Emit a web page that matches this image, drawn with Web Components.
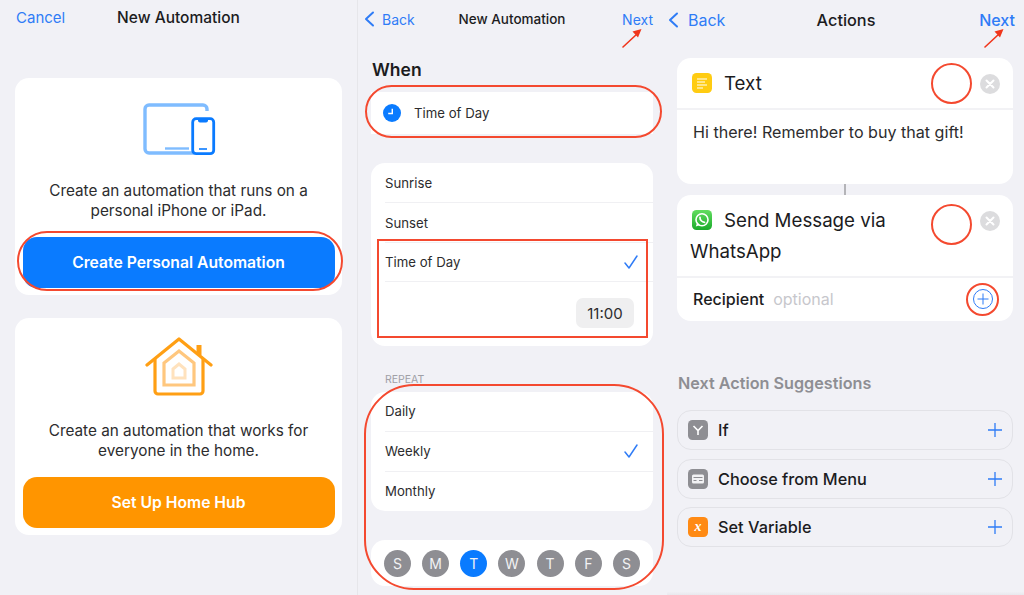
<!DOCTYPE html>
<html>
<head>
<meta charset="utf-8">
<title>Automation steps</title>
<style>
    html, body {
        margin: 0;
        height: 100%;
        background: #f1f1f6;
        font-family: Inter, "Liberation Sans", sans-serif;
        color: #1c1c1e;
        overflow: hidden;
    }
    #screens {
        display: grid;
        grid-template-columns: 357px 307px 360px;
        width: 1024px;
        height: 595px;
    }
</style>
</head>
<body>

<template id="nav-template">
    <style>
        :host {
            display: grid;
            grid-template-columns: 1fr auto 1fr;
            align-items: center;
            height: var(--nav-height, 34px);
            padding: var(--nav-padding, 0 16px);
            font-size: var(--nav-size, 15.5px);
        }
        .side { color: #2f7cf6; display: flex; align-items: center; font-size: var(--nav-side-size, 15px); }
        .end { justify-content: flex-end; font-weight: var(--next-weight, 400); }
        .title { font-weight: 500; color: #1c1c1e; }
    </style>
    <div class="side"><slot name="start"></slot></div>
    <div class="title"><slot></slot></div>
    <div class="side end"><slot name="end"></slot></div>
</template>

<template id="card-template">
    <style>
        :host {
            display: block;
            background: #fff;
            border-radius: 14px;
            overflow: hidden;
        }
    </style>
    <slot></slot>
</template>

<template id="row-template">
    <style>
        :host {
            display: flex;
            align-items: center;
            justify-content: space-between;
            height: 39.8px;
            margin-left: 14px;
            padding-right: 15px;
            font-size: 13.2px;
            color: #2c2c2e;
            box-sizing: border-box;
            border-bottom: 1px solid #f0f0f3;
        }
        :host([last]) { border-bottom: 0; }
        svg { display: none; }
        :host([checked]) svg { display: block; }
    </style>
    <slot></slot>
    <svg width="14" height="14" viewBox="0 0 14 14" fill="none" stroke="#2f7cf6" stroke-width="1.5" stroke-linecap="round" stroke-linejoin="round"><path d="M1 8l4 5L13 1"/></svg>
</template>

<template id="choice-template">
    <style>
        :host {
            display: flex;
            flex-direction: column;
            align-items: center;
            height: 100%;
            box-sizing: border-box;
            background: #fff;
            border-radius: 14px;
            padding: var(--choice-top, 25px) 8px 7.5px;
        }
        p {
            margin: 0;
            height: 42px;
            padding-top: 24px;
            font-size: 15.3px;
            line-height: 19.5px;
            text-align: center;
            color: #2c2c2e;
        }
        button {
            margin-top: auto;
            width: 312px;
            height: 51px;
            border: 0;
            border-radius: 14px;
            background: var(--action, #0a7bff);
            color: #fff;
            font: 600 15.7px Inter, "Liberation Sans", sans-serif;
        }
    </style>
    <slot name="icon"></slot>
    <p><slot name="text"></slot></p>
    <button><slot name="action"></slot></button>
</template>

<template id="day-template">
    <style>
        :host {
            display: flex;
            align-items: center;
            justify-content: center;
            width: 27px;
            height: 27px;
            border-radius: 50%;
            background: #8e8e93;
            color: #f2f2f4;
            font-size: 14px;
        }
        :host([on]) { background: #0a7bff; }
    </style>
    <slot></slot>
</template>

<template id="action-template">
    <style>
        :host {
            display: block;
            background: #fff;
            border-radius: 14px;
            overflow: hidden;
        }
        header {
            position: relative;
            padding: 10px 13px 9px var(--head-left, 15px);
            font-size: 18.7px;
            line-height: 31px;
            border-bottom: 2px solid #f2f2f5;
            color: #1c1c1e;
        }
        .icon { display: inline-block; width: 20px; height: 20px; vertical-align: -3px; margin-right: var(--icon-gap, 12px); }
        .close {
            position: absolute;
            right: 13px;
            top: 16px;
            width: 20px;
            height: 20px;
        }
    </style>
    <header>
        <span class="icon"><slot name="icon"></slot></span><slot name="title"></slot>
        <svg class="close" viewBox="0 0 20 20"><circle cx="10" cy="10" r="10" fill="#dcdcde"/><path d="M6.5 6.5l7 7M13.5 6.5l-7 7" stroke="#fff" stroke-width="2" stroke-linecap="round"/></svg>
    </header>
    <slot></slot>
</template>

<template id="suggestion-template">
    <style>
        :host {
            display: flex;
            align-items: center;
            gap: 10px;
            height: 40px;
            padding: 0 10px;
            box-sizing: border-box;
            border: 1px solid #e2e2e7;
            border-radius: 14px;
            font-size: 16.3px;
            font-weight: 500;
            color: #1c1c1e;
        }
        span { flex: 1; }
    </style>
    <slot name="icon"></slot>
    <span><slot></slot></span>
    <svg width="14" height="14" viewBox="0 0 14 14" stroke="#2f7cf6" stroke-width="1.3"><path d="M7 0v14M0 7h14"/></svg>
</template>

<template id="mark-template">
    <style>
        :host {
            position: absolute;
            display: block;
            box-sizing: border-box;
            border: 2px solid #f4492f;
            pointer-events: none;
        }
    </style>
</template>

<template id="arrow-template">
    <style>
        :host { position: absolute; display: block; width: 20px; height: 20px; }
        svg { display: block; }
    </style>
    <svg width="20" height="20" viewBox="0 0 20 20" fill="#f0361c" stroke="#f0361c" stroke-width="1.6" stroke-linecap="round">
        <path d="M1 19L15 6" fill="none"/>
        <path d="M19.5 1l-9 2.5 5.500 6z" stroke="none"/>
    </svg>
</template>

<div id="screens">
    <!-- first screen -->
    <section style="position: relative; padding: 0 15px;">
        <ios-nav style="--nav-padding: 0 1px; margin-bottom: 44px;">
            <span slot="start">Cancel</span>
            New Automation
        </ios-nav>
        <choice-card style="height: 217px; margin-bottom: 23px;">
            <svg slot="icon" width="74" height="54" viewBox="0 0 74 54" fill="none">
                <path d="M65 8V6a4 4 0 0 0-4-4H7a4 4 0 0 0-4 4v40a4 4 0 0 0 4 4h45" stroke="#7fbcff" stroke-width="3.4"/>
                <path d="M23 45.5h24" stroke="#7fbcff" stroke-width="2.4"/>
                <rect x="50.7" y="15.7" width="21" height="35" rx="3.5" stroke="#0a7bff" stroke-width="2.8"/>
                <path d="M56 16.5h10v1a2 2 0 0 1-2 2h-6a2 2 0 0 1-2-2z" fill="#0a7bff"/>
                <path d="M57 46h8" stroke="#0a7bff" stroke-width="1.6"/>
            </svg>
            <span slot="text">Create an automation that runs on a<br>personal iPhone or iPad.</span>
            <span slot="action">Create Personal Automation</span>
        </choice-card>
        <choice-card style="height: 217px; --action: #ff9500; --choice-top: 19px;">
            <svg slot="icon" width="68" height="60" viewBox="0 0 68 60" fill="none" stroke-linecap="round" stroke-linejoin="round">
                <path d="M2 28L34 2l32 26" stroke="#ff9f14" stroke-width="3.2"/>
                <path d="M54 18V8" stroke="#ff9f14" stroke-width="5" stroke-linecap="butt"/>
                <path d="M10 22.5V54a3 3 0 0 0 3 3h42a3 3 0 0 0 3-3V22.5" stroke="#ff9f14" stroke-width="3.2"/>
                <path d="M19 26L34 14l15 12v22H19z" stroke="#ffc77e" stroke-width="3.2" stroke-linejoin="miter"/>
                <path d="M28 32l6-5 6 5v9H28z" stroke="#ffe2bd" stroke-width="3" stroke-linejoin="miter"/>
            </svg>
            <span slot="text">Create an automation that works for<br>everyone in the home.</span>
            <span slot="action">Set Up Home Hub</span>
        </choice-card>
        <red-mark style="left: 17px; top: 231px; width: 326px; height: 60px; border-radius: 30px;"></red-mark>
    </section>

    <!-- second screen -->
    <section style="position: relative; padding: 0 11px 0 13px; border-left: 1px solid #e6e6ea; box-sizing: border-box;">
        <ios-nav style="--nav-padding: 0; --nav-height: 38px; --nav-size: 13.5px; --nav-side-size: 14px; --chevron-gap: 7px; margin: 0 -7px 0 -7px;">
            <span slot="start"><back-chevron></back-chevron>Back</span>
            New Automation
            <span slot="end" style="margin-right: 7px;">Next</span>
        </ios-nav>
        <h2 style="margin: 22px 0 12px 1px; font-size: 17.5px; line-height: 20px; font-weight: 600;">When</h2>
        <ios-card style="height: 42px; border-radius: 0; display: flex; align-items: center; gap: 13px; padding-left: 12px; font-size: 13.2px; color: #2c2c2e;">
            <svg width="18" height="18" viewBox="0 0 19 19"><circle cx="9.5" cy="9.5" r="9.5" fill="#0a7bff"/><path d="M9.8 5v5H5.5" fill="none" stroke="#fff" stroke-width="1.5"/></svg>
            Time of Day
        </ios-card>
        <ios-card style="margin-top: 29px; height: 183px;">
            <ios-row style="padding-top: 1px;">Sunrise</ios-row>
            <ios-row style="padding-top: 1px;">Sunset</ios-row>
            <ios-row checked style="padding-top: 1px;">Time of Day</ios-row>
            <ios-row last style="justify-content: flex-end; padding: 0 19px 0 0; height: 62px; margin: 0; font-size: 15px;">
                <span style="display: flex; align-items: center; justify-content: center; width: 58px; height: 30px; background: #efeff0; border-radius: 7px;">11:00</span>
            </ios-row>
        </ios-card>
        <div style="margin: 27px 0 0 14px; height: 19px; font-size: 10.5px; line-height: 13px; color: #a0a0a6;">REPEAT</div>
        <ios-card style="height: 119px;">
            <ios-row>Daily</ios-row>
            <ios-row checked>Weekly</ios-row>
            <ios-row last>Monthly</ios-row>
        </ios-card>
        <ios-card style="margin-top: 29px; height: 46px; display: flex; align-items: center; justify-content: space-between; padding: 0 13px; box-sizing: border-box;">
            <week-day>S</week-day><week-day>M</week-day><week-day on>T</week-day><week-day>W</week-day><week-day>T</week-day><week-day>F</week-day><week-day>S</week-day>
        </ios-card>
        <red-mark style="left: 7px; top: 85px; width: 297px; height: 53px; border-radius: 27px;"></red-mark>
        <red-mark style="left: 19px; top: 239px; width: 271px; height: 99px;"></red-mark>
        <red-mark style="left: 5.5px; top: 383.5px; width: 300px; height: 206px; border-radius: 50px;"></red-mark>
        <red-arrow style="left: 264px; top: 28px;"></red-arrow>
    </section>

    <!-- third screen -->
    <section style="position: relative; padding: 0 11px 0 13px; box-sizing: border-box;">
        <ios-nav style="--nav-padding: 0; --nav-height: 40px; --nav-size: 16.3px; --nav-side-size: 16px; --next-weight: 500; --chevron-gap: 9px; margin: 0 -11px 18px -9px;">
            <span slot="start"><back-chevron></back-chevron>Back</span>
            Actions
            <span slot="end" style="margin-right: 9px;">Next</span>
        </ios-nav>
        <action-card style="height: 126px;">
            <app-icon slot="icon" kind="text"></app-icon>
            <span slot="title">Text</span>
            <div style="padding: 12px 16px; font-size: 16.1px; line-height: 20px; color: #2c2c2e;">Hi there! Remember to buy that gift!</div>
        </action-card>
        <div style="width: 2px; height: 11px; margin: 0 auto; background: #b4b4b8;"></div>
        <action-card style="height: 126px; --head-left: 13px; --icon-gap: 14px;">
            <app-icon slot="icon" kind="whatsapp" style="margin-left: 2px;"></app-icon>
            <span slot="title">Send Message via<br>WhatsApp</span>
            <div style="display: flex; align-items: center; height: 42px; padding: 0 20px 0 16px; font-size: 16px;">
                <span style="font-weight: 500; margin-right: 9px;">Recipient</span>
                <span style="color: #c7c7cc; flex: 1;">optional</span>
                <svg width="20" height="20" viewBox="0 0 20 20" fill="none" stroke="#2f7cf6" stroke-width="1"><circle cx="10" cy="10" r="9.5"/><path d="M10 4.5v11M4.5 10h11"/></svg>
            </div>
        </action-card>
        <div style="margin: 52px 0 17px 1px; font-size: 16.2px; line-height: 20px; font-weight: 600; color: #8e8e93;">Next Action Suggestions</div>
        <div style="display: grid; gap: 8.7px;">
            <action-suggestion><app-icon slot="icon" kind="if"></app-icon>If</action-suggestion>
            <action-suggestion><app-icon slot="icon" kind="menu"></app-icon>Choose from Menu</action-suggestion>
            <action-suggestion><app-icon slot="icon" kind="variable"></app-icon>Set Variable</action-suggestion>
        </div>
        <red-mark style="left: 267px; top: 63px; width: 41px; height: 41px; border-radius: 50%;"></red-mark>
        <red-mark style="left: 267px; top: 204px; width: 41px; height: 41px; border-radius: 50%;"></red-mark>
        <red-mark style="left: 302px; top: 283px; width: 33px; height: 33px; border-radius: 50%;"></red-mark>
        <red-arrow style="left: 319.5px; top: 28px;"></red-arrow>
        <!-- edge of the tab bar that was cropped off -->
        <div style="position: absolute; left: 3px; right: 0; bottom: 0; height: 3px; background: linear-gradient(#f0f0f5, #e8e8ed);"></div>
    </section>
</div>

<script>
    // every element with a plain template gets the same treatment
    const fromTemplate = (tag, id) => {
        customElements.define(tag, class extends HTMLElement {
            constructor() {
                super();
                this.attachShadow({ mode: 'open' });
                this.shadowRoot.appendChild(document.getElementById(id).content.cloneNode(true));
            }
        });
    };

    fromTemplate('ios-nav', 'nav-template');
    fromTemplate('ios-card', 'card-template');
    fromTemplate('ios-row', 'row-template');
    fromTemplate('choice-card', 'choice-template');
    fromTemplate('week-day', 'day-template');
    fromTemplate('action-card', 'action-template');
    fromTemplate('action-suggestion', 'suggestion-template');
    fromTemplate('red-mark', 'mark-template');
    fromTemplate('red-arrow', 'arrow-template');

    customElements.define('back-chevron', class extends HTMLElement {
        constructor() {
            super();
            this.attachShadow({ mode: 'open' });
            this.shadowRoot.innerHTML = `
                <style>
                    :host { display: inline-block; vertical-align: -2px; margin-right: var(--chevron-gap, 8px); }
                    svg { display: block; }
                </style>
                <svg width="11" height="16" viewBox="0 0 11 16" fill="none" stroke="#2f7cf6" stroke-width="2" stroke-linecap="round" stroke-linejoin="round"><path d="M9 1.5L2 8l7 6.5"/></svg>
            `;
        }
    });

    customElements.define('app-icon', class extends HTMLElement {
        constructor() {
            super();
            this.glyphs = {
                text: ['#ffcc12', '<path d="M5 6h10M5 9h8M5 12h10M5 15h6" stroke="#fff" stroke-width="1.2"/>'],
                whatsapp: ['url(#wa)', '<circle cx="10" cy="9.8" r="6" fill="none" stroke="#fff" stroke-width="1.6"/><path d="M3.8 16.5l1.4-4.2 2.700 2.700z" fill="#fff"/><path d="M8 7.5c0 2.500 2 4.500 4.500 4.800" fill="none" stroke="#fff" stroke-width="1.8" stroke-linecap="round"/>'],
                if: ['#8e8e93', '<path d="M5.5 6L10 10.5 14.5 6M10 10v5" fill="none" stroke="#fff" stroke-width="1.6"/>'],
                menu: ['#8e8e93', '<rect x="4" y="5.5" width="12" height="9" rx="1.5" fill="#f2f2f4"/><path d="M5.5 8.5h9" stroke="#8e8e93" stroke-width="1"/><path d="M5.5 11.5h3M11 11.5h3.5" stroke="#8e8e93" stroke-width="1"/>'],
                variable: ['#ff8a14', '<text x="10" y="14" text-anchor="middle" font-family="Liberation Serif, serif" font-style="italic" font-weight="700" font-size="14" fill="#fff">x</text>'],
            };
            this.attachShadow({ mode: 'open' });
        }

        connectedCallback() {
            const [color, glyph] = this.glyphs[this.getAttribute('kind')];
            this.shadowRoot.innerHTML = `
                <style>
                    :host { display: block; width: 20px; height: 20px; }
                    svg { display: block; }
                </style>
                <svg width="20" height="20" viewBox="0 0 20 20">
                    <defs><linearGradient id="wa" x1="0" y1="0" x2="0" y2="1"><stop offset="0" stop-color="#62dd5f"/><stop offset="1" stop-color="#1aab2b"/></linearGradient></defs>
                    <rect width="20" height="20" rx="4.5" fill="${color}"/>${glyph}
                </svg>
            `;
        }
    });
</script>
</body>
</html>
